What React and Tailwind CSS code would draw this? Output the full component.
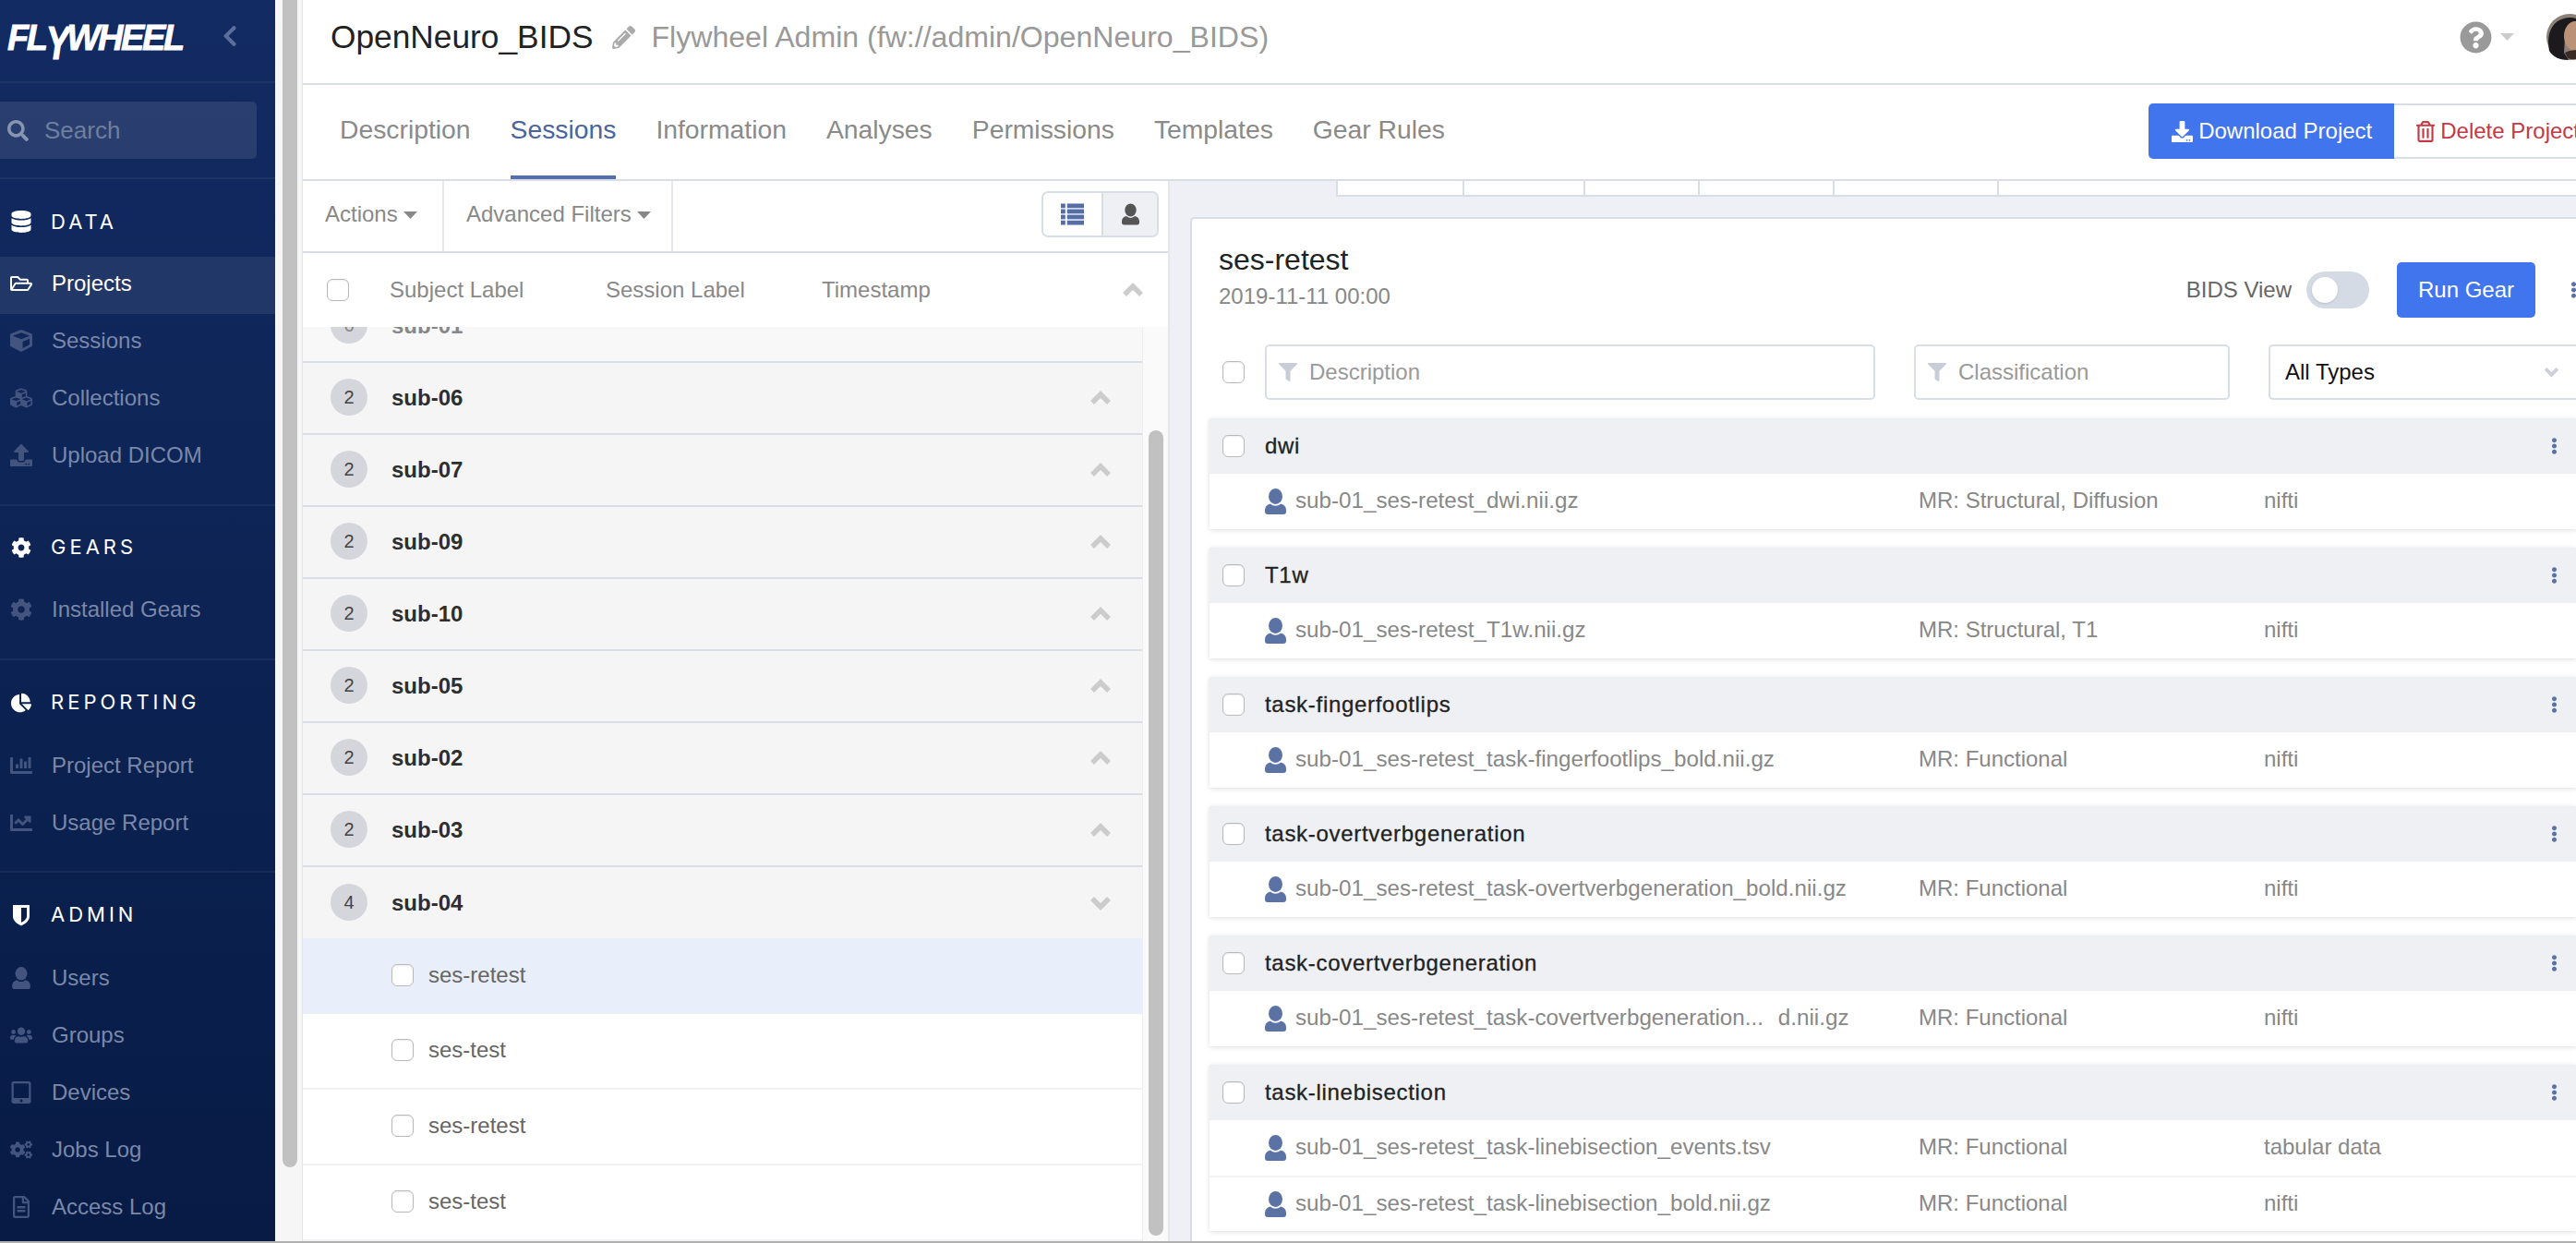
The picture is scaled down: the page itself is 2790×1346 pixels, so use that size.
import {
  FaDatabase, FaRegFolderOpen, FaCube, FaCubes, FaUpload, FaCog, FaChartPie, FaChartBar, FaChartLine,
  FaUsers, FaTabletAlt, FaCogs, FaRegFileAlt, FaSearch, FaPencilAlt, FaChevronLeft,
  FaQuestionCircle, FaDownload, FaRegTrashAlt, FaFilter, FaEllipsisV,
} from 'react-icons/fa'

const UserIcon = ({ className }) => (
  <svg viewBox="0 0 23 28" className={className} fill="currentColor">
    <ellipse cx="11.5" cy="8.5" rx="7.5" ry="8.5" />
    <path d="M6 16.5c1.5 1.5 3.5 2.2 5.5 2.2s4-.7 5.5-2.2c4 1 6 3.5 6 7V25c0 2-1 3-3 3H3c-2 0-3-1-3-3v-1.5c0-3.5 2-6 6-7z" />
  </svg>
)

const ShieldIcon = ({ className }) => (
  <svg viewBox="0 0 20 24" className={className} fill="currentColor">
    <path d="M1 1h18v12c0 5-4 8-9 10.500C5 21 1 18 1 13V1zm9 3v16c3-1.700 6-3.800 6-7V4h-6z" fillRule="evenodd" />
  </svg>
)

const ThListIcon = ({ className }) => (
  <svg viewBox="0 0 26 24" className={className} fill="currentColor">
    <rect x="0" y="0" width="5" height="5" /><rect x="7" y="0" width="19" height="5" />
    <rect x="0" y="6.300" width="5" height="5" /><rect x="7" y="6.300" width="19" height="5" />
    <rect x="0" y="12.600" width="5" height="5" /><rect x="7" y="12.600" width="19" height="5" />
    <rect x="0" y="19" width="5" height="5" /><rect x="7" y="19" width="19" height="5" />
  </svg>
)

const Chevron = ({ down, className }) => (
  <svg viewBox="0 0 24 16" className={className} fill="none" stroke="currentColor" strokeWidth="5.500">
    <path d={down ? 'M3 3l9 9 9-9' : 'M3 13l9-9 9 9'} />
  </svg>
)

const Caret = ({ className }) => (
  <svg viewBox="0 0 15 8" className={className} fill="currentColor"><path d="M0 0h15L7.500 8z" /></svg>
)

const Checkbox = () => (
  <span className="block w-[24px] h-[24px] shrink-0 rounded-[6px] border border-[#b9b9b9] bg-white shadow-[inset_0_1px_2px_rgba(0,0,0,0.08)]" />
)

const navSections = [
  { title: 'DATA', icon: FaDatabase, head: 'h-[84px] pt-[8px]', pb: 'pb-[20px]', items: [
    { label: 'Projects', icon: FaRegFolderOpen, active: true },
    { label: 'Sessions', icon: FaCube },
    { label: 'Collections', icon: FaCubes },
    { label: 'Upload DICOM', icon: FaUpload },
  ] },
  { title: 'GEARS', icon: FaCog, head: 'h-[83px] pt-[6px]', pb: 'pb-[20px]', items: [
    { label: 'Installed Gears', icon: FaCog },
  ] },
  { title: 'REPORTING', icon: FaChartPie, head: 'h-[85px] pt-[6px]', pb: 'pb-[19px]', items: [
    { label: 'Project Report', icon: FaChartBar },
    { label: 'Usage Report', icon: FaChartLine },
  ] },
  { title: 'ADMIN', icon: ShieldIcon, head: 'h-[85px] pt-[6px]', pb: 'pb-0', last: true, items: [
    { label: 'Users', icon: UserIcon },
    { label: 'Groups', icon: FaUsers },
    { label: 'Devices', icon: FaTabletAlt },
    { label: 'Jobs Log', icon: FaCogs },
    { label: 'Access Log', icon: FaRegFileAlt },
  ] },
]

function Sidebar() {
  return (
    <aside className="w-[298px] shrink-0 h-full overflow-hidden bg-linear-to-b from-[#122b62] to-[#071b45]">
      <div className="h-[90px] flex items-center border-b-2 border-white/5 relative">
        <div className="pl-[8px] pb-[6px] text-white font-bold italic text-[38px] leading-none tracking-[-2.4px] [-webkit-text-stroke:0.8px_#ffffff] whitespace-nowrap">
          FL<span className="inline-block scale-y-[1.3] origin-top">Y</span>WHEEL
        </div>
        <FaChevronLeft className="absolute left-[240px] top-[26px] w-[18px] h-[26px] text-[#5a6f9a]" />
      </div>
      <div className="h-[104px] pt-[20px] border-b-2 border-white/5">
        <div className="w-[278px] h-[62px] rounded-r-[5px] bg-white/10 flex items-center text-[#6f7f9f]">
          <FaSearch className="ml-[8px] w-[23px] h-[23px] text-[#8895b0]" />
          <span className="ml-[17px] text-[26px]">Search</span>
        </div>
      </div>
      {navSections.map(section => (
        <div key={section.title} className={`${section.pb} ${section.last ? '' : 'border-b-2 border-white/5'}`}>
          <div className={`${section.head} flex items-center text-white`}>
            <div className="w-[46px] flex justify-center"><section.icon className="w-[22px] h-[24px]" /></div>
            <span className="ml-[9px] font-['Inter'] text-[22px] tracking-[4px]">{section.title}</span>
          </div>
          {section.items.map(item => (
            <div
              key={item.label}
              className={`h-[62px] flex items-center pb-[4px] text-[24px] ${item.active ? 'bg-white/8 text-white' : 'text-[#7b88a8]'}`}
            >
              <div className={`w-[46px] flex justify-center ${item.active ? 'text-white' : 'text-[#43557f]'}`}>
                <item.icon className="w-[24px] h-[24px]" />
              </div>
              <span className="ml-[10px]">{item.label}</span>
            </div>
          ))}
        </div>
      ))}
    </aside>
  )
}

const tabs = ['Description', 'Sessions', 'Information', 'Analyses', 'Permissions', 'Templates', 'Gear Rules']

function TopBars() {
  return (
    <>
      <div className="h-[92px] shrink-0 flex items-center pl-[30px] pb-[10px] border-b-2 border-[#d8dde8] overflow-hidden">
        <span className="text-[35.300px] text-[#222]">OpenNeuro_BIDS</span>
        <FaPencilAlt className="ml-[20px] w-[25px] h-[25px] text-[#aaaaaa]" />
        <span className="ml-[18px] text-[32.100px] text-[#999]">Flywheel Admin (fw://admin/OpenNeuro_BIDS)</span>
        <FaQuestionCircle className="ml-auto w-[35px] h-[35px] text-[#9a9a9a]" />
        <Caret className="ml-[9px] w-[15px] h-[8px] text-[#cccccc]" />
        <svg viewBox="0 0 50 50" className="ml-[35px] mr-[-18px] w-[50px] h-[50px] shrink-0">
          <circle cx="25" cy="25" r="25" fill="#8c8078" />
          <path d="M3 40C0 24 4 9 19 5c7-2 16-1 22 6L29 11 20 25l-1 17 5 8c-9 0-17-3-21-10z" fill="#1c1a1c" />
          <ellipse cx="31" cy="24" rx="12" ry="16" fill="#bb9178" />
          <path d="M20 42c5-3 16-4 26-3l-4 8c-6 3-15 3-19 1z" fill="#3a2a25" />
        </svg>
      </div>
      <div className="h-[104px] shrink-0 flex items-stretch pl-[40px] border-b-2 border-[#d8dde8] overflow-hidden">
        {tabs.map(tab => (
          <div
            key={tab}
            className={`mr-[43px] pb-[2px] flex items-center border-b-4 text-[28.300px] ${tab === 'Sessions' ? 'border-[#5470a8] text-[#4a64a0]' : 'border-transparent text-[#8a8a8a]'}`}
          >
            {tab}
          </div>
        ))}
        <div className="ml-auto mr-[-30px] flex items-center pb-[2px] text-[24px]">
          <button className="h-[60px] pl-[25px] pr-[24px] rounded-l-[5px] bg-[#4175ee] text-white flex items-center">
            <FaDownload className="w-[23px] h-[23px] mr-[6px]" />Download Project
          </button>
          <button className="h-[60px] pl-[24px] pr-[24px] rounded-r-[5px] border-2 border-l-0 border-[#d8dde8] text-[#c23a45] flex items-center">
            <FaRegTrashAlt className="w-[20px] h-[23px] mr-[6px]" />Delete Project
          </button>
        </div>
      </div>
    </>
  )
}

const subjects = [
  ['2', 'sub-06'], ['2', 'sub-07'], ['2', 'sub-09'], ['2', 'sub-10'],
  ['2', 'sub-05'], ['2', 'sub-02'], ['2', 'sub-03'],
]

function SubjectRow({ count, label, open, faded }) {
  return (
    <div className={`shrink-0 flex items-center pl-[30px] pr-[33px] text-[24px] ${open ? 'h-[77px]' : 'h-[78px] border-b-2 border-[#d8dde8]'} ${faded ? 'bg-[#f8f8f8]' : 'bg-[#f5f5f5]'}`}>
      <span className={`w-[40px] h-[40px] -mt-[2px] rounded-full bg-[#d5d6dc] flex items-center justify-center text-[20px] ${faded ? 'text-[#888]' : 'text-[#444]'}`}>{count}</span>
      <span className={`ml-[26px] font-bold ${faded ? 'text-[#888]' : 'text-[#2e2e2e]'}`}>{label}</span>
      {!faded && <Chevron down={open} className="ml-auto w-[24px] h-[16px] text-[#cccccc]" />}
    </div>
  )
}

function LeftPanel() {
  const sessions = ['ses-retest', 'ses-test', 'ses-retest', 'ses-test']
  return (
    <div className="w-[939px] shrink-0 flex flex-col border-r-2 border-[#e4e6ec] bg-white text-[24px]">
      <div className="h-[78px] shrink-0 flex items-center border-b-2 border-[#d8dde8] text-[#888]">
        <div className="h-full flex items-center pl-[24px] w-[153px] border-r-2 border-[#e4e7ee] pb-[4px]">Actions<Caret className="ml-[6px] mt-[2px] w-[15px] h-[8px]" /></div>
        <div className="h-full flex items-center pl-[24px] w-[248px] border-r-2 border-[#e4e7ee] pb-[4px]">Advanced Filters<Caret className="ml-[6px] mt-[2px] w-[15px] h-[8px]" /></div>
        <div className="ml-auto mr-[10px] mb-[4px] flex h-[50px] w-[127px] rounded-[7px] border-2 border-[#d8dde8] overflow-hidden">
          <div className="w-[65px] flex items-center justify-center text-[#546fa8] border-r-2 border-[#d8dde8]"><ThListIcon className="w-[25px] h-[24px]" /></div>
          <div className="flex-1 flex items-center justify-center bg-[#eef0f4] text-[#555]"><UserIcon className="w-[19px] h-[24px]" /></div>
        </div>
      </div>
      <div className="h-[80px] shrink-0 flex items-center pl-[26px] pr-[26px] text-[#888] relative z-10 bg-white">
        <Checkbox />
        <span className="ml-[44px] w-[234px]">Subject Label</span>
        <span className="w-[234px]">Session Label</span>
        <span>Timestamp</span>
        <Chevron className="ml-auto w-[24px] h-[16px] text-[#cccccc]" />
      </div>
      <div className="flex-1 flex min-h-0 overflow-hidden">
        <div className="w-[909px] shrink-0 flex flex-col -mt-[39px]">
          <SubjectRow count="6" label="sub-01" faded />
          {subjects.map(([count, label]) => <SubjectRow key={label} count={count} label={label} />)}
          <SubjectRow count="4" label="sub-04" open />
          {sessions.map((s, i) => (
            <div
              key={i}
              className={`h-[82px] shrink-0 flex items-center pl-[96px] pb-[2px] text-[#666] ${i === 0 ? 'bg-[#e8effa]' : 'bg-white border-b-2 border-[#f1f2f6]'}`}
            >
              <Checkbox />
              <span className="ml-[16px]">{s}</span>
            </div>
          ))}
        </div>
        <div className="flex-1 bg-[#fafafa] border-l border-[#eeeeee] pt-[112px] pl-[6px]">
          <div className="w-[16px] h-[872px] rounded-full bg-[#c1c1c1]" />
        </div>
      </div>
    </div>
  )
}

const groups = [
  { name: 'dwi', files: [['sub-01_ses-retest_dwi.nii.gz', 'MR: Structural, Diffusion', 'nifti']] },
  { name: 'T1w', files: [['sub-01_ses-retest_T1w.nii.gz', 'MR: Structural, T1', 'nifti']] },
  { name: 'task-fingerfootlips', files: [['sub-01_ses-retest_task-fingerfootlips_bold.nii.gz', 'MR: Functional', 'nifti']] },
  { name: 'task-overtverbgeneration', files: [['sub-01_ses-retest_task-overtverbgeneration_bold.nii.gz', 'MR: Functional', 'nifti']] },
  { name: 'task-covertverbgeneration', files: [['sub-01_ses-retest_task-covertverbgeneration...', 'MR: Functional', 'nifti', 'd.nii.gz']] },
  { name: 'task-linebisection', files: [
    ['sub-01_ses-retest_task-linebisection_events.tsv', 'MR: Functional', 'tabular data'],
    ['sub-01_ses-retest_task-linebisection_bold.nii.gz', 'MR: Functional', 'nifti'],
  ] },
]

function FileGroup({ group }) {
  return (
    <div className="shrink-0 mb-[20px] shadow-[0_1px_5px_rgba(0,0,0,0.14)] bg-white">
      <div className="h-[60px] flex items-center pl-[14px] pr-[20px] pb-[1px] bg-[#eff0f4]">
        <Checkbox />
        <span className="ml-[22px] text-[24px] text-[#222] [-webkit-text-stroke:0.3px_#222] tracking-[0.7px]">{group.name}</span>
        <FaEllipsisV className="ml-auto w-[7px] h-[18px] text-[#5b72a5]" />
      </div>
      {group.files.map((file, i) => (
        <div key={file[0]} className={`h-[60px] pb-[2px] flex items-center pl-[60px] text-[24px] text-[#888] ${i > 0 ? 'border-t-2 border-[#f1f2f6]' : ''}`}>
          <UserIcon className="w-[23px] h-[28px] mt-[2px] text-[#5b72a5]" />
          <div className="ml-[10px] w-[675px] flex text-[24.200px]">
            <span>{file[0]}</span>
            {file[3] && <span className="ml-[16px]">{file[3]}</span>}
          </div>
          <span className="w-[374px]">{file[1]}</span>
          <span>{file[2]}</span>
        </div>
      ))}
    </div>
  )
}

function RightPanel() {
  const stubs = ['w-[137px]', 'w-[131px]', 'w-[124px]', 'w-[146px]', 'w-[178px]', 'flex-1']
  return (
    <div className="flex-1 min-w-0 flex flex-col bg-[#eef0f5] overflow-hidden">
      <div className="h-[17px] shrink-0 ml-[180px] flex bg-white border-b-2 border-l-2 border-[#d8dde8]">
        {stubs.map((w, i) => <div key={i} className={`${w} ${i < 5 ? 'border-r-2 border-[#d8dde8]' : ''}`} />)}
      </div>
      <div className="mt-[22px] ml-[22px] flex-1 min-h-0 pl-[19px] border-2 border-r-0 border-b-0 border-[#d8dde8] rounded-tl-[5px] bg-white text-[24px] overflow-hidden">
        <div className="h-[107px] flex items-start">
          <div className="pl-[10px] pt-[26px]">
            <div className="h-[36px] leading-[36px] text-[32px] text-[#222]">ses-retest</div>
            <div className="mt-[6px] h-[32px] leading-[32px] text-[#888]">2019-11-11 00:00</div>
          </div>
          <div className="ml-auto mr-[-1px] mt-[47px] flex items-center">
            <span className="text-[#666]">BIDS View</span>
            <span className="ml-[16px] w-[68px] h-[40px] rounded-full bg-[#d5dbe5] flex items-center pl-[6px]">
              <span className="w-[28px] h-[28px] rounded-full bg-white shadow-sm" />
            </span>
            <button className="ml-[30px] w-[150px] h-[60px] rounded-[5px] bg-[#4175ee] text-white">Run Gear</button>
            <FaEllipsisV className="ml-[38px] w-[7px] h-[18px] text-[#5b72a5]" />
          </div>
        </div>
        <div className="mt-[29px] flex items-center h-[60px]">
          <div className="ml-[14px]"><Checkbox /></div>
          <div className="ml-[22px] w-[661px] h-[60px] rounded-[5px] border-2 border-[#d8dde8] flex items-center text-[#999]">
            <FaFilter className="ml-[13px] w-[20px] h-[20px] text-[#c8cdd8]" />
            <span className="ml-[13px]">Description</span>
          </div>
          <div className="ml-[42px] w-[342px] h-[60px] rounded-[5px] border-2 border-[#d8dde8] flex items-center text-[#999]">
            <FaFilter className="ml-[13px] w-[20px] h-[20px] text-[#c8cdd8]" />
            <span className="ml-[13px]">Classification</span>
          </div>
          <div className="ml-[42px] flex-1 h-[60px] rounded-l-[5px] border-2 border-r-0 border-[#d8dde8] flex items-center pl-[16px] text-[#111]">
            All Types
            <Chevron down className="ml-auto mr-[18px] w-[17px] h-[12px] text-[#ccd0d8]" />
          </div>
        </div>
        <div className="mt-[20px]">
          {groups.map(group => <FileGroup key={group.name} group={group} />)}
        </div>
      </div>
    </div>
  )
}

export default function App() {
  return (
    <div className="w-[2790px] h-[1346px] flex flex-col overflow-hidden bg-white font-['Liberation_Sans',sans-serif]">
      <div className="h-[1344px] shrink-0 flex">
        <Sidebar />
        <div className="w-[30px] shrink-0 pl-[8px] bg-[#f6f6f6] border-r border-[#e4e4e4]">
          <div className="w-[16px] h-[1264px] rounded-b-full bg-[#c1c1c1]" />
        </div>
        <main className="flex-1 min-w-0 flex flex-col overflow-hidden">
          <TopBars />
          <div className="flex-1 min-h-0 flex">
            <LeftPanel />
            <RightPanel />
          </div>
        </main>
      </div>
      <div className="h-[2px] shrink-0 bg-[#b0b0b0]" />
    </div>
  )
}
